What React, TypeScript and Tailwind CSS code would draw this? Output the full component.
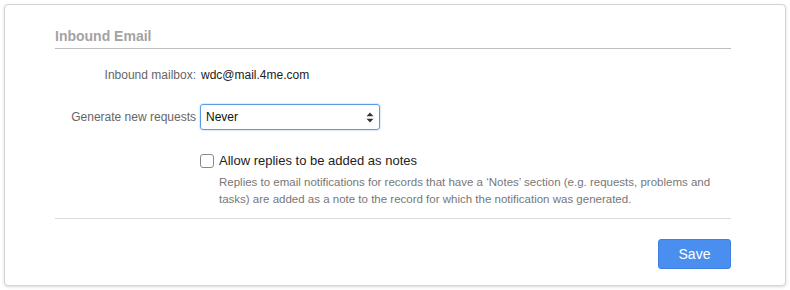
import React from "react";

export default function App() {
  return (
    <div className="w-[790px] h-[290px] bg-white p-[4px]" style={{ fontFamily: '"Liberation Sans", Arial, sans-serif' }}>
      <div className="h-[282px] rounded-[4px] border border-[#d4d4d4] shadow-[0_1px_3px_rgba(0,0,0,0.15)] bg-white pl-[50px] pr-[54px] pt-[23px]">
        <div className="border-b border-[#bdbdbd] pb-[4px] text-[14px] leading-[16px] font-bold text-[#a3a3a3]">Inbound Email</div>

        <div className="mt-[18px] flex items-center text-[12px] leading-[16px]">
          <div className="w-[141px] text-right text-[#666]">Inbound mailbox:</div>
          <div className="ml-[5px] text-[#222]">wdc@mail.4me.com</div>
        </div>

        <div className="mt-[21px] flex items-center text-[12px]">
          <div className="w-[141px] text-right text-[#666] whitespace-nowrap">Generate new requests</div>
          <div className="ml-[4px] w-[180px] h-[26px] rounded-[3px] border border-[#5a9be6] shadow-[0_0_2px_rgba(74,144,226,0.6)] flex items-center justify-between pl-[5px] pr-[5px] text-[#111]">
            <span>Never</span>
            <svg width="8" height="11" viewBox="0 0 8 11">
              <path d="M4 0.5 L7.5 4.3 L0.5 4.3 Z" fill="#333" />
              <path d="M4 10.5 L7.5 6.7 L0.5 6.7 Z" fill="#333" />
            </svg>
          </div>
        </div>

        <div className="mt-[22px] flex items-start ml-[145px]">
          <div className="mt-[2px] w-[14px] h-[14px] rounded-[3px] border border-[#8a8a8a] bg-white shrink-0" />
          <div className="ml-[5px]">
            <div className="text-[13px] leading-[17px] text-[#222]">Allow replies to be added as notes</div>
            <div className="mt-[5px] text-[11.5px] leading-[17px] text-[#777] whitespace-nowrap">
              Replies to email notifications for records that have a ‘Notes’ section (e.g. requests, problems and
              <br />
              tasks) are added as a note to the record for which the notification was generated.
            </div>
          </div>
        </div>

        <div className="mt-[10px] border-t border-[#dcdcdc]" />

        <div className="mt-[20px] flex justify-end">
          <button className="w-[73px] h-[30px] rounded-[3px] bg-[#4a8ff0] border border-[#3d80e0] text-white text-[14px]">Save</button>
        </div>
      </div>
    </div>
  );
}
